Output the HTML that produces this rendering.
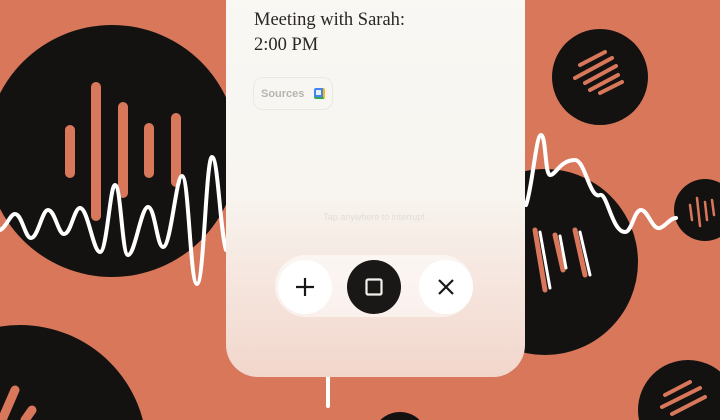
<!DOCTYPE html>
<html><head><meta charset="utf-8"><style>
html,body{margin:0;padding:0;overflow:hidden}
body{width:720px;height:420px;overflow:hidden;background:#d9775b;position:relative;font-family:"Liberation Sans",sans-serif}
svg.bg{position:absolute;left:0;top:0}
.card{position:absolute;left:226px;top:-40px;width:299px;height:417px;border-radius:0 0 32px 32px;background:linear-gradient(#f9f8f4 0%,#f8f5f0 55%,#f5e4dc 80%,#f2d6cb 100%)}
.t{position:absolute;left:254px;font-family:"Liberation Serif",serif;font-size:18.5px;color:#2a2623}
.src{position:absolute;left:253px;top:77px;width:80px;height:33px;box-sizing:border-box;border:1px solid #ebe8e2;border-radius:10px;font-size:11px;color:#b8b5b0;font-weight:bold}
.tap{position:absolute;left:300px;top:212px;width:148px;text-align:center;font-size:9px;color:#e0ddd8}
.bar{position:absolute;left:275px;top:255px;width:198px;height:62px;border-radius:31px;background:rgba(255,255,255,0.55)}
.b{position:absolute;top:260px;width:54px;height:54px;border-radius:50%;background:#fff}
</style></head><body>
<svg class="bg" width="720" height="420">
<circle cx="112" cy="151" r="126" fill="#141211"/>
<g stroke="#d9775b" stroke-width="10" stroke-linecap="round">
<line x1="70" y1="130" x2="70" y2="173"/><line x1="96" y1="87" x2="96" y2="216"/><line x1="123" y1="107" x2="123" y2="193"/><line x1="149" y1="128" x2="149" y2="173"/><line x1="176" y1="118" x2="176" y2="182"/>
</g>
<circle cx="20" cy="452" r="127" fill="#141211"/>
<g stroke="#d9775b" stroke-width="9" stroke-linecap="round"><line x1="2" y1="420" x2="15" y2="390"/><line x1="25" y1="420" x2="32" y2="410"/></g>
<circle cx="600" cy="77" r="48" fill="#141211"/>
<g stroke="#d9775b" stroke-width="4" stroke-linecap="round">
<line x1="580" y1="65" x2="605" y2="52"/><line x1="575" y1="78" x2="612" y2="58"/><line x1="585" y1="83" x2="616" y2="66"/><line x1="590" y1="90" x2="618" y2="75"/><line x1="600" y1="93" x2="622" y2="82"/>
</g>
<circle cx="545" cy="262" r="93" fill="#141211"/>
<g stroke="#d9775b" stroke-width="5" stroke-linecap="round"><line x1="535" y1="230" x2="545" y2="290"/><line x1="555" y1="235" x2="563" y2="270"/><line x1="575" y1="230" x2="585" y2="275"/></g>
<g stroke="#fff" stroke-width="3" stroke-linecap="round"><line x1="540" y1="232" x2="550" y2="288"/><line x1="560" y1="236" x2="566" y2="268"/><line x1="580" y1="232" x2="590" y2="275"/></g>
<circle cx="705" cy="210" r="31" fill="#141211"/>
<g stroke="#d9775b" stroke-width="2.5" stroke-linecap="round"><line x1="690" y1="205" x2="692" y2="220"/><line x1="697" y1="198" x2="700" y2="226"/><line x1="705" y1="202" x2="707" y2="220"/><line x1="712" y1="200" x2="714" y2="215"/></g>
<circle cx="688" cy="410" r="50" fill="#141211"/>
<g stroke="#d9775b" stroke-width="4" stroke-linecap="round"><line x1="665" y1="395" x2="690" y2="382"/><line x1="662" y1="407" x2="700" y2="388"/><line x1="672" y1="414" x2="705" y2="397"/></g>
<circle cx="400" cy="440" r="28" fill="#141211"/>
<path d="M0,230 C6,228 10,214 15,214 C22,214 25,238 31,238 C38,238 42,210 48,210 C55,210 58,234 64,234 C71,234 74,208 80,208 C88,208 93,252 100,252 C107,252 110,185 115,185 C121,185 122,255 128,255 C135,255 141,207 148,207 C155,207 157,247 163,247 C171,247 176,176 182,176 C189,176 190,284 197,284 C204,284 206,157 212,157 C218,157 220,230 226,250" fill="none" stroke="#fff" stroke-width="4" stroke-linecap="round"/>
<path d="M526,205 C532,190 536,135 541,135 C546,135 545,175 550,175 C556,175 560,160 575,160 C585,160 590,200 600,195 C607,192 612,232 625,232 C632,232 634,210 641,210 C648,210 652,230 660,228 C666,226 670,218 676,218" fill="none" stroke="#fff" stroke-width="4" stroke-linecap="round"/>
<line x1="328" y1="378" x2="328" y2="406" stroke="#fff" stroke-width="4" stroke-linecap="round"/>
</svg>
<div class="card"></div>
<div class="t" style="top:10px">Meeting with Sarah:</div>
<div class="t" style="top:35px">2:00 PM</div>
<div class="src"><span style="position:absolute;left:7px;top:10px">Sources</span>
<span style="position:absolute;left:60px;top:10px;width:11px;height:11px;border-radius:2px;background:#4285f4;border-right:2px solid #fbbc04;border-bottom:2px solid #34a853;box-sizing:border-box"><span style="position:absolute;left:2px;top:2px;width:5px;height:5px;background:#e8f0fe"></span></span></div>
<div class="tap">Tap anywhere to interrupt</div>
<div class="bar"></div>
<div class="b" style="left:278px"><svg width="54" height="54"><g stroke="#1a1816" stroke-width="2.2"><line x1="27" y1="18" x2="27" y2="36"/><line x1="18" y1="27" x2="36" y2="27"/></g></svg></div>
<div class="b" style="left:347px;background:#1a1816"><svg width="54" height="54"><rect x="19.5" y="19.5" width="15" height="15" rx="1.5" fill="none" stroke="#f5f2ee" stroke-width="2.2"/></svg></div>
<div class="b" style="left:419px"><svg width="54" height="54"><g stroke="#1a1816" stroke-width="2.2"><line x1="20" y1="20" x2="34" y2="34"/><line x1="34" y1="20" x2="20" y2="34"/></g></svg></div>
</body></html>
